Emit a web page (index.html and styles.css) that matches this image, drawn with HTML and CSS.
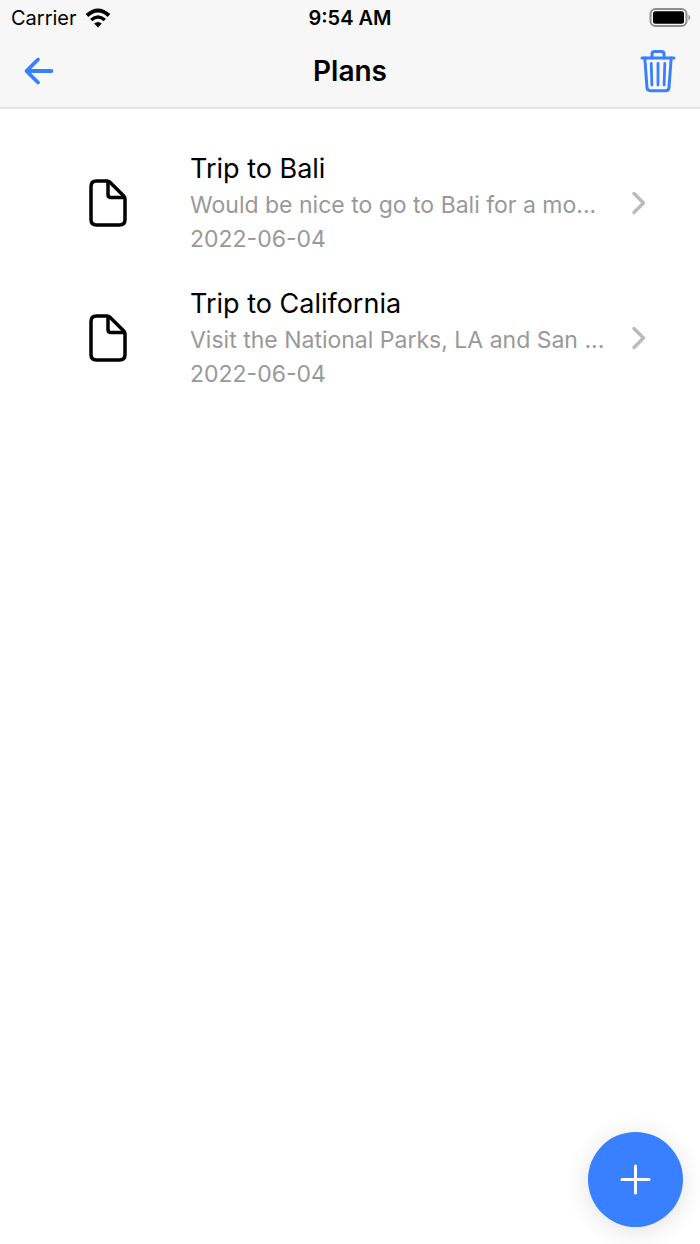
FILE: index.html
```html
<!DOCTYPE html>
<html lang="en">
<head>
    <meta charset="UTF-8">
    <meta name="viewport" content="width=device-width, initial-scale=1">
    <title>Plans</title>
    <link rel="stylesheet" href="styles.css">
</head>
<body>
<header class="header">
    <div class="status">
        <div class="carrier">
            <span>Carrier</span>
            <svg class="wifi" width="26" height="20" viewBox="0 0 26 20" aria-hidden="true">
                <path d="M2 7.500Q13 -2.500 24 7.500" stroke-width="4"/>
                <path d="M6.200 12Q13 6 19.800 12" stroke-width="3.500"/>
                <path class="wifi-dot" d="M9.200 15.600Q13 12.400 16.800 15.600L13 19.500Z"/>
            </svg>
        </div>
        <span class="time">9:54 AM</span>
        <svg class="battery" width="40" height="20" viewBox="0 0 40 20" aria-hidden="true">
            <rect class="battery-case" x="1.500" y="1" width="36" height="17" rx="5"/>
            <rect x="4" y="3.200" width="31" height="12.600" rx="2.500"/>
            <path class="battery-cap" d="M39.500 6.400Q43 9.500 39.500 12.600Z"/>
        </svg>
    </div>
    <div class="navbar">
        <button class="nav-btn" type="button" aria-label="Back">
            <svg width="30" height="28" viewBox="0 0 30 28">
                <path d="M14 2.500L2.500 14L14 25.500M3 14H27.500" stroke-width="3.800"/>
            </svg>
        </button>
        <h1 class="title">Plans</h1>
        <button class="nav-btn" type="button" aria-label="Delete">
            <svg width="36" height="44" viewBox="0 0 36 44">
                <path d="M2 9H34" stroke-width="3"/>
                <path d="M4.800 9L7 38.500Q7.300 41.700 10.500 41.700H25.500Q28.700 41.700 29 38.500L31.200 9" stroke-width="3"/>
                <path d="M12 9V5Q12 2.500 14.500 2.500H21.500Q24 2.500 24 5V9" stroke-width="3"/>
                <path d="M11.200 14.500L11.900 36M18 14.500V36M24.800 14.500L24.100 36" stroke-width="2.800"/>
            </svg>
        </button>
    </div>
</header>

<main>
    <ul class="plans">
        <li>
            <a class="plan" href="#">
                <svg class="doc" width="38" height="48" viewBox="0 0 38 48" aria-hidden="true">
                    <path d="M7.500 2H18Q19.800 2 21 3.200L34.800 17Q36 18.200 36 20V40.500Q36 46 30.500 46H7.500Q2 46 2 40.500V7.500Q2 2 7.500 2Z"/>
                    <path d="M19 2.500V15.500Q19 18.500 22 18.500H35.500"/>
                </svg>
                <span class="info">
                    <span class="name">Trip to Bali</span>
                    <span class="text">Would be nice to go to Bali for a mo...</span>
                    <span class="text">2022-06-04</span>
                </span>
                <svg class="chevron" width="16" height="24" viewBox="0 0 16 24" aria-hidden="true">
                    <path d="M3 2.500L12.500 12L3 21.500"/>
                </svg>
            </a>
        </li>
        <li>
            <a class="plan" href="#">
                <svg class="doc" width="38" height="48" viewBox="0 0 38 48" aria-hidden="true">
                    <path d="M7.500 2H18Q19.800 2 21 3.200L34.800 17Q36 18.200 36 20V40.500Q36 46 30.500 46H7.500Q2 46 2 40.500V7.500Q2 2 7.500 2Z"/>
                    <path d="M19 2.500V15.500Q19 18.500 22 18.500H35.500"/>
                </svg>
                <span class="info">
                    <span class="name">Trip to California</span>
                    <span class="text">Visit the National Parks, LA and San ...</span>
                    <span class="text">2022-06-04</span>
                </span>
                <svg class="chevron" width="16" height="24" viewBox="0 0 16 24" aria-hidden="true">
                    <path d="M3 2.500L12.500 12L3 21.500"/>
                </svg>
            </a>
        </li>
    </ul>
</main>

<button class="fab" type="button" aria-label="Add plan">
    <svg width="31" height="31" viewBox="0 0 31 31">
        <path d="M15.500 2V29M2 15.500H29" stroke-width="3"/>
    </svg>
</button>
</body>
</html>
```
FILE: styles.css
```css
* {
    margin: 0;
    padding: 0;
    box-sizing: border-box;
}

body {
    font-family: Inter, "Liberation Sans", sans-serif;
    color: #000;
    background-color: #fff;
}

svg {
    display: block;
    flex: none;
    overflow: visible;
}

button {
    border: none;
    background: none;
    cursor: pointer;
}

button path {
    fill: none;
    stroke: currentColor;
    stroke-linecap: round;
    stroke-linejoin: round;
}

/* header */
.header {
    background-color: #f7f7f7;
    border-bottom: 2px solid #e6e6e6;
}

.status {
    display: grid;
    grid-template-columns: 1fr auto 1fr;
    align-items: center;
    height: 36px;
    padding: 0 11px;
    font-size: 20px;
}

.carrier {
    display: flex;
    align-items: center;
    gap: 8px;
}

.wifi path {
    fill: none;
    stroke: #000;
}

.wifi .wifi-dot {
    fill: #000;
    stroke: none;
}

.time {
    font-weight: 600;
}

.battery {
    justify-self: end;
}

.battery-case {
    fill: none;
    stroke: #8e8e8e;
    stroke-width: 2;
}

.battery-cap {
    fill: #8e8e8e;
}

.navbar {
    display: grid;
    grid-template-columns: 1fr auto 1fr;
    align-items: center;
    height: 71px;
    padding: 0 24px 2px;
}

.nav-btn {
    justify-self: start;
    color: #3880ff;
}

.nav-btn:last-child {
    justify-self: end;
}

.title {
    font-size: 28px;
    font-weight: 600;
}

/* list of plans */
.plans {
    list-style: none;
    padding: 26px 53px 0 89px;
}

.plan {
    display: flex;
    align-items: center;
    height: 135px;
    color: inherit;
    text-decoration: none;
}

.doc path {
    fill: none;
    stroke: #000;
    stroke-width: 3.5;
    stroke-linejoin: round;
}

.info {
    flex: 1;
    min-width: 0;
    margin: 0 20px 0 63px;
}

.name,
.text {
    display: block;
    line-height: 34px;
    overflow: hidden;
    white-space: nowrap;
    text-overflow: ellipsis;
}

.name {
    font-size: 27px;
    line-height: 38px;
}

.text {
    font-size: 23px;
    color: #999;
}

.chevron path {
    fill: none;
    stroke: #bbb;
    stroke-width: 3.5;
    stroke-linecap: round;
    stroke-linejoin: round;
}

/* add button */
.fab {
    position: fixed;
    right: 17px;
    bottom: 17px;
    display: flex;
    align-items: center;
    justify-content: center;
    width: 95px;
    height: 95px;
    border-radius: 50%;
    color: #fff;
    background-color: #3880ff;
    box-shadow: 0 4px 24px rgba(0, 0, 0, 0.12);
}
```
